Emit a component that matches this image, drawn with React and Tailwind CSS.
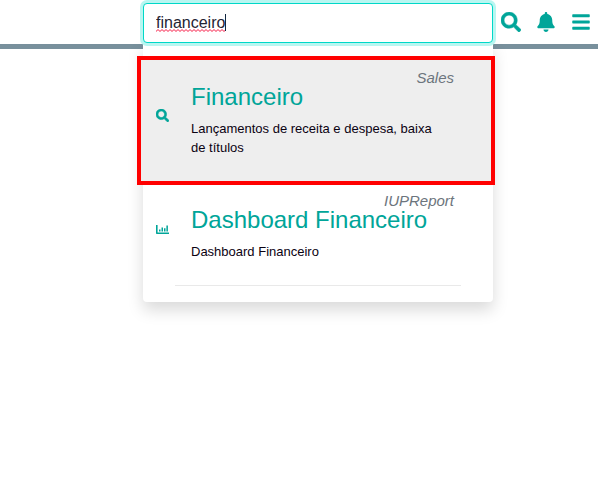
import React, { useState } from "react";
import { FaSearch, FaBell, FaBars } from "react-icons/fa";

function ChartIcon() {
  return (
    <svg viewBox="0 0 13 13" className="h-[13px] w-[13px]" fill="currentColor" aria-hidden="true">
      <path d="M0 2h1.6v7.6H13V11H.8a.8.8 0 0 1-.8-.8z" />
      <path d="M3 6.6h1.5v2H3zM5.5 4.4H7v4.2H5.5zM8 5.2h1.5v3.4H8zM10.4 2.6h1.5v6h-1.5z" />
    </svg>
  );
}

function SpellingMark() {
  return (
    <svg
      viewBox="0 0 70 3"
      className="pointer-events-none absolute top-[29px] left-[13px] z-20 h-[3px] w-[70px]"
      aria-hidden="true"
    >
      <defs>
        <pattern id="wave" width="4" height="3" patternUnits="userSpaceOnUse">
          <path d="M-1 1.5L0 2.5L2 .5L4 2.5L5 1.5" fill="none" stroke="#f5103c" strokeWidth="1" />
        </pattern>
      </defs>
      <rect width="70" height="3" fill="url(#wave)" />
    </svg>
  );
}

function IconButton({ label, children }) {
  return (
    <button
      type="button"
      aria-label={label}
      className="flex h-11 w-[35px] shrink-0 items-center justify-center text-xl text-[#00a599]"
    >
      {children}
    </button>
  );
}

function Result({ icon, module, title, description }) {
  return (
    <a href="#result" className="flex items-center">
      <span className="w-8 shrink-0 pt-[3px] pl-[13px] text-[13px] text-[#00a599]">{icon}</span>
      <span className="block min-w-0 flex-1 pr-[37px] pl-4">
        <span className="block text-right text-[15px] leading-[14px] text-[#6c757d] italic">
          {module}
        </span>
        <span className="block text-2xl leading-6 whitespace-nowrap text-[#00a599]">{title}</span>
        <span className="mt-2.5 block pr-2 text-[13px] leading-[19px] text-[#0b0212]">
          {description}
        </span>
      </span>
    </a>
  );
}

export default function App() {
  const [query, setQuery] = useState("financeiro");

  return (
    <div className="min-h-screen bg-white font-['Liberation_Sans',Arial,sans-serif]">
      <header className="flex justify-end border-b-[5px] border-[#78909c]">
        <div className="relative h-11 w-[350px] pt-[3px]">
          <input
            type="text"
            aria-label="Pesquisar"
            spellCheck={false}
            value={query}
            onChange={(e) => setQuery(e.target.value)}
            className="relative z-10 block h-10 w-full rounded border border-[#00d8c8] bg-white px-3 text-base text-[#1f2433] shadow-[0_0_0_3px_#b9f6f1] outline-none"
          />
          <SpellingMark />
          <span className="absolute top-3.5 left-[82px] z-20 h-[17px] w-px bg-[#12263f]" />

          <ul className="absolute inset-x-0 top-[43px] rounded-b bg-white pt-[13px] pb-4 shadow-[0_8px_16px_rgba(0,0,0,0.15)]">
            <li className="-mr-0.5 -ml-1.5 border-4 border-[#ff0000] bg-[#eeeeee] pt-[11px] pb-6 pl-0.5">
              <Result
                icon={<FaSearch stroke="currentColor" strokeWidth="24" />}
                module="Sales"
                title="Financeiro"
                description="Lançamentos de receita e despesa, baixa de títulos"
              />
            </li>
            <li className="pt-[9px] pr-0.5">
              <Result
                icon={<ChartIcon />}
                module="IUPReport"
                title="Dashboard Financeiro"
                description="Dashboard Financeiro"
              />
              <hr className="mt-6 mr-[30px] ml-8 border-[#e9e9e9]" />
            </li>
          </ul>
        </div>

        <nav className="flex">
          <IconButton label="Pesquisar">
            <FaSearch stroke="currentColor" strokeWidth="12" />
          </IconButton>
          <IconButton label="Notificações"><FaBell /></IconButton>
          <IconButton label="Menu"><FaBars /></IconButton>
        </nav>
      </header>
    </div>
  );
}
